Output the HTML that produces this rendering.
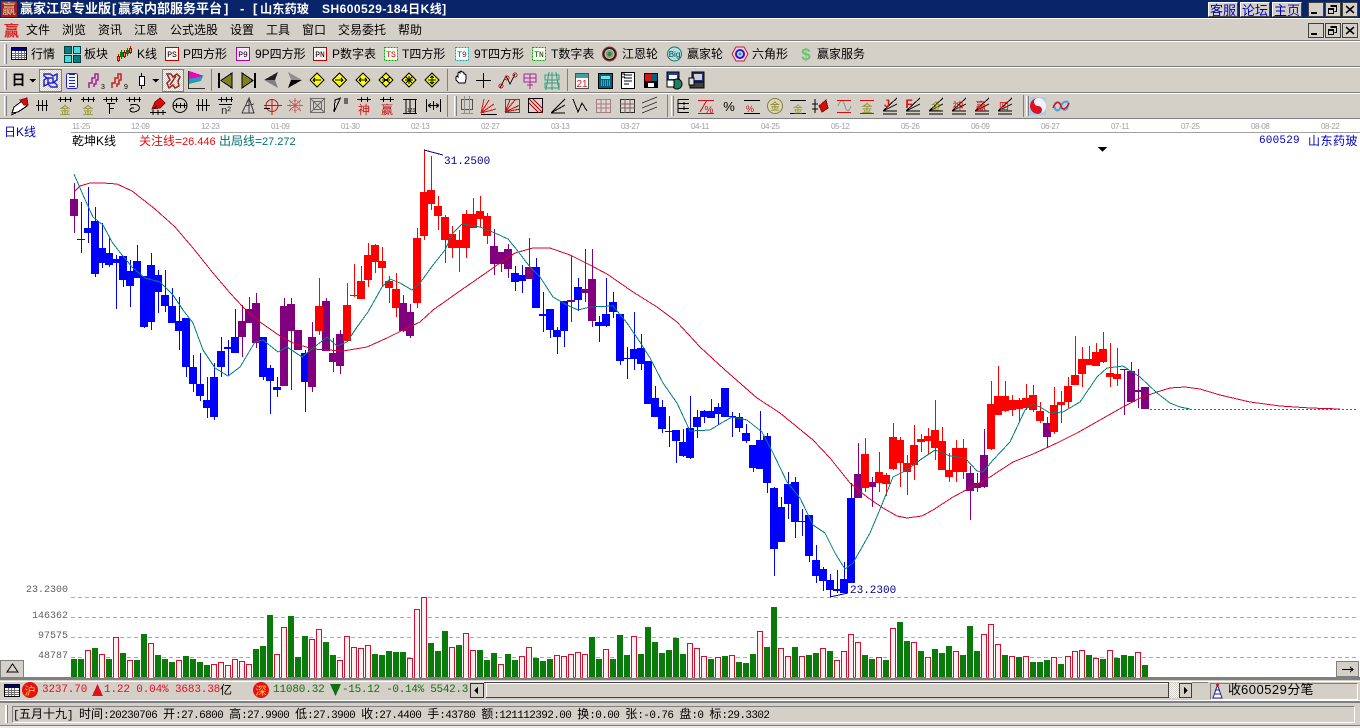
<!DOCTYPE html>
<html><head><meta charset="utf-8"><title>赢家江恩专业版</title>
<style>
html,body{margin:0;padding:0;width:1360px;height:728px;overflow:hidden;background:#d4d0c8}
.t{position:absolute;white-space:pre;font:12px/14px "Liberation Sans","WenQuanYi Zen Hei","Noto Sans CJK SC",sans-serif;color:#000}
.b{position:absolute}
.n{font-family:"Liberation Sans",sans-serif}
.m{font:11px/14px "Liberation Mono",monospace;letter-spacing:-.15px}
.ax{position:absolute;top:122px;font:8px/10px "Liberation Sans",sans-serif;letter-spacing:-.4px;color:#a0a0a0;white-space:pre}
.yl{position:absolute;width:50px;left:18px;text-align:right;font:10px/12px "Liberation Mono",monospace;color:#606060}
.st i{font:normal 11px/14px "Liberation Mono",monospace;letter-spacing:-.6px}
.wb{position:absolute;background:#d4d0c8;border-top:1px solid #fff;border-left:1px solid #fff;border-right:1px solid #404040;border-bottom:1px solid #404040;box-sizing:border-box;color:#0000c0;font:13px/13px "WenQuanYi Zen Hei","Noto Sans CJK SC",sans-serif;text-align:center}
svg{position:absolute;left:0;top:0}
</style></head>
<body>
<!-- title -->
<div class="b" style="left:0;top:0;width:1360px;height:18px;background:#0a246a"></div>
<div class="b" style="left:0;top:18px;width:1360px;height:1px;background:#fff"></div>
<span class="t" style="left:20px;top:2px;color:#fff;font-weight:bold;font-size:13px">赢家江恩专业版</span>
<span class="t" style="left:112px;top:2px;color:#fff;font-weight:bold;font-size:13px">[</span>
<span class="t" style="left:118px;top:2px;color:#fff;font-weight:bold;font-size:13px">赢家内部服务平台</span>
<span class="t" style="left:224px;top:2px;color:#fff;font-weight:bold;font-size:13px">]</span>
<span class="t" style="left:240px;top:2px;color:#fff;font-weight:bold;font-size:13px">-</span>
<span class="t" style="left:253px;top:2px;color:#fff;font-weight:bold;font-size:13px">[</span>
<span class="t" style="left:260px;top:2px;color:#fff;font-weight:bold;font-size:12px;letter-spacing:.1px;font-size:12.200px">山东药玻</span>
<span class="t" style="left:322px;top:2px;color:#fff;font-weight:bold;font-size:12px;letter-spacing:.45px">SH600529-184日K线]</span>
<div class="wb" style="left:1208px;top:2px;width:30px;height:15px">客服</div>
<div class="wb" style="left:1240px;top:2px;width:30px;height:15px">论坛</div>
<div class="wb" style="left:1272px;top:2px;width:30px;height:15px">主页</div>
<!-- separators -->
<div class="b" style="left:0;top:40px;width:1360px;height:1px;background:#808080"></div>
<div class="b" style="left:0;top:41px;width:1360px;height:1px;background:#fff"></div>
<div class="b" style="left:0;top:66px;width:1360px;height:1px;background:#808080"></div>
<div class="b" style="left:0;top:67px;width:1360px;height:1px;background:#fff"></div>
<div class="b" style="left:0;top:92px;width:1360px;height:1px;background:#808080"></div>
<div class="b" style="left:0;top:93px;width:1360px;height:1px;background:#fff"></div>
<!-- menu -->
<span class="t" style="left:26px;top:23px">文件</span>
<span class="t" style="left:62px;top:23px">浏览</span>
<span class="t" style="left:98px;top:23px">资讯</span>
<span class="t" style="left:134px;top:23px">江恩</span>
<span class="t" style="left:170px;top:23px">公式选股</span>
<span class="t" style="left:230px;top:23px">设置</span>
<span class="t" style="left:266px;top:23px">工具</span>
<span class="t" style="left:302px;top:23px">窗口</span>
<span class="t" style="left:338px;top:23px">交易委托</span>
<span class="t" style="left:398px;top:23px">帮助</span>
<!-- toolbar 1 -->
<span class="t" style="left:31px;top:47px">行情</span>
<span class="t" style="left:84px;top:47px">板块</span>
<span class="t" style="left:137px;top:47px">K线</span>
<span class="t" style="left:183px;top:47px">P四方形</span>
<span class="t" style="left:255px;top:47px">9P四方形</span>
<span class="t" style="left:332px;top:47px">P数字表</span>
<span class="t" style="left:402px;top:47px">T四方形</span>
<span class="t" style="left:474px;top:47px">9T四方形</span>
<span class="t" style="left:551px;top:47px">T数字表</span>
<span class="t" style="left:622px;top:47px">江恩轮</span>
<span class="t" style="left:687px;top:47px">赢家轮</span>
<span class="t" style="left:752px;top:47px">六角形</span>
<span class="t" style="left:817px;top:47px">赢家服务</span>
<!-- chart bg -->
<div class="b" style="left:0;top:118px;width:1360px;height:559px;background:#fff;border-top:1px solid #808080;box-sizing:border-box"></div>
<div class="b" style="left:71px;top:132px;width:1289px;height:1px;background:#a0a0a0"></div>
<span class="ax" style="left:72px">11-25</span><span class="ax" style="left:131px">12-09</span><span class="ax" style="left:201px">12-23</span><span class="ax" style="left:271px">01-09</span><span class="ax" style="left:341px">01-30</span><span class="ax" style="left:411px">02-13</span><span class="ax" style="left:481px">02-27</span><span class="ax" style="left:551px">03-13</span><span class="ax" style="left:621px">03-27</span><span class="ax" style="left:691px">04-11</span><span class="ax" style="left:761px">04-25</span><span class="ax" style="left:831px">05-12</span><span class="ax" style="left:901px">05-26</span><span class="ax" style="left:971px">06-09</span><span class="ax" style="left:1041px">06-27</span><span class="ax" style="left:1111px">07-11</span><span class="ax" style="left:1181px">07-25</span><span class="ax" style="left:1251px">08-08</span><span class="ax" style="left:1321px">08-22</span>
<!-- bottom chrome -->
<div class="b" style="left:0;top:677px;width:1360px;height:3px;background:#808080"></div>
<div class="b" style="left:0;top:681px;width:1360px;height:1px;background:#fff"></div>
<div class="b" style="left:0;top:700px;width:1360px;height:1px;background:#fff"></div>
<div class="b" style="left:0;top:701px;width:1360px;height:2px;background:#808080"></div>
<div class="b" style="left:12px;top:706px;width:1343px;height:17px;border:1px solid;border-color:#808080 #fff #fff #808080;box-sizing:border-box"></div>
<div class="b" style="left:5px;top:705px;width:2px;height:18px;background:#fff;border-right:1px solid #808080"></div>
<div class="b" style="left:0;top:725px;width:1360px;height:1px;background:#808080"></div>
<div class="b" style="left:0;top:726px;width:1360px;height:2px;background:#eceae4"></div>
<div class="b" style="left:1210px;top:683px;width:148px;height:17px;border:1px solid;border-color:#808080 #fff #fff #808080;box-sizing:border-box"></div>

<svg width="1360" height="728" viewBox="0 0 1360 728" shape-rendering="crispEdges">
<defs>
<path id="fan" fill="none" stroke="#000" d="M-7 8L7-5M-7 8L7 1M-7 8H7M-7 11H7"/>
<path id="dia" fill="#ff0" stroke="#000" d="M0-7L7 0 0 7-7 0Z"/>
<pattern id="chk" width="2" height="2" patternUnits="userSpaceOnUse"><rect width="2" height="2" fill="#fff"/><rect width="1" height="1" fill="#d4d0c8"/><rect x="1" y="1" width="1" height="1" fill="#d4d0c8"/></pattern>
</defs>

<!-- grid -->
<g stroke="#aaa" stroke-dasharray="4 3"><path d="M71 597.500H1358M71 617.500H1358M71 637.500H1358M71 657.500H1358"/></g>

<!-- volume green -->
<path fill="none" stroke="#0a7a0a" stroke-width="6" d="M74 659V677M81 659V677M95 648V677M109 659V677M123 653V677M137 660V677M144 634V677M158 655V677M165 659V677M172 662V677M186 656V677M193 659V677M200 662V677M207 665V677M256 649V677M263 646V677M270 615V677M291 616V677M298 657V677M305 636V677M326 642V677M333 655V677M375 654V677M382 655V677M389 651V677M396 652V677M403 652V677M431 643V677M438 651V677M445 631V677M459 645V677M480 650V677M487 660V677M494 653V677M508 654V677M515 660V677M536 658V677M543 661V677M550 659V677M592 637V677M599 659V677M613 659V677M620 635V677M627 655V677M641 654V677M648 627V677M655 642V677M662 653V677M669 650V677M676 638V677M683 654V677M711 659V677M725 656V677M739 662V677M746 663V677M753 654V677M767 647V677M774 607V677M795 647V677M809 655V677M816 653V677M830 651V677M865 655V677M872 659V677M886 660V677M900 622V677M907 641V677M921 651V677M935 649V677M942 653V677M949 646V677M963 655V677M970 626V677M977 651V677M1005 655V677M1019 657V677M1033 662V677M1040 662V677M1047 660V677M1061 664V677M1089 655V677M1103 659V677M1117 658V677M1124 655V677M1131 656V677M1145 665V677"/>
<!-- volume red -->
<path fill="none" stroke="#d01030" stroke-width="6" d="M88 650V677M102 654V677M116 637V677M130 660V677M151 643V677M179 660V677M214 664V677M221 662V677M228 665V677M235 659V677M242 661V677M249 664V677M277 654V677M284 627V677M312 639V677M319 629V677M340 660V677M347 636V677M354 647V677M361 648V677M368 645V677M410 658V677M417 609V677M424 597V677M452 647V677M466 633V677M473 650V677M501 664V677M522 656V677M529 647V677M557 655V677M564 656V677M571 654V677M578 652V677M585 654V677M606 649V677M634 636V677M690 643V677M697 648V677M704 656V677M718 657V677M732 655V677M760 631V677M781 648V677M788 656V677M802 656V677M823 648V677M837 660V677M844 651V677M851 634V677M858 642V677M879 657V677M893 628V677M914 642V677M928 657V677M956 651V677M984 634V677M991 624V677M998 644V677M1012 656V677M1026 656V677M1054 657V677M1068 656V677M1075 651V677M1082 650V677M1096 658V677M1110 650V677M1138 652V677"/>
<g transform="translate(0,1)"><path fill="none" stroke="#fff0f0" stroke-width="4" d="M88 650V677M102 654V677M116 637V677M130 660V677M151 643V677M179 660V677M214 664V677M221 662V677M228 665V677M235 659V677M242 661V677M249 664V677M277 654V677M284 627V677M312 639V677M319 629V677M340 660V677M347 636V677M354 647V677M361 648V677M368 645V677M410 658V677M417 609V677M424 597V677M452 647V677M466 633V677M473 650V677M501 664V677M522 656V677M529 647V677M557 655V677M564 656V677M571 654V677M578 652V677M585 654V677M606 649V677M634 636V677M690 643V677M697 648V677M704 656V677M718 657V677M732 655V677M760 631V677M781 648V677M788 656V677M802 656V677M823 648V677M837 660V677M844 651V677M851 634V677M858 642V677M879 657V677M893 628V677M914 642V677M928 657V677M956 651V677M984 634V677M991 624V677M998 644V677M1012 656V677M1026 656V677M1054 657V677M1068 656V677M1075 651V677M1082 650V677M1096 658V677M1110 650V677M1138 652V677"/></g>

<!-- wicks -->
<g fill="none" transform="translate(.5,0)">
<path stroke="#0000ff" d="M81 202V253M88 187V243M95 207V277M102 223V268M109 238V267M116 255V309M123 257V287M130 260V307M137 245V278M144 276V328M151 253V330M158 270V313M165 270V312M172 288V323M179 297V350M186 318V377M193 355V392M200 353V401M207 377V418M214 363V420M221 337V377M228 340V375M235 309V353M263 337V380M270 365V414M277 377V397M305 350V412M515 266V291M522 265V293M536 258V308M543 292V332M550 309V338M557 327V354M564 301V347M578 278V311M599 316V342M606 278V327M613 292V318M620 314V365M627 347V379M634 312V370M641 334V370M648 361V404M655 386V417M662 400V433M669 416V447M676 430V463M683 429V457M690 396V459M697 410V438M704 410V423M711 399V418M718 403V425M725 388V417M732 412V437M739 413V432M746 424V443M753 445V472M760 411V469M767 433V493M774 487V576M781 497V542M788 472V519M795 477V538M802 509V536M809 515V562M816 545V583M823 567V591M830 574V597M837 570V593M844 562V593M851 483V583"/>
<path stroke="#800080" d="M74 183V233M242 305V357M249 297V323M256 293V348M284 298V386M291 298V390M298 330V350M312 322V392M326 298V351M333 338V372M340 330V374M403 295V332M410 304V338M494 229V275M501 252V272M508 244V278M529 238V278M571 255V322M585 249V302M592 249V327M858 443V498M872 477V507M970 466V520M977 473V492M984 429V488M1047 417V448M1124 369V415M1131 362V402M1138 369V408M1145 387V409"/>
<path stroke="#ff0000" d="M319 278V335M347 283V341M354 264V297M361 266V299M368 243V287M375 244V273M382 247V287M389 276V303M396 273V317M417 228V308M424 150V240M431 156V210M438 196V230M445 215V263M452 226V258M459 230V272M466 210V258M473 198V228M480 196V227M487 213V244M865 438V492M879 452V492M886 473V496M893 423V470M900 437V487M907 455V495M914 425V480M921 434V452M928 428V455M935 400V460M942 427V470M949 453V482M956 440V482M963 439V479M991 381V450M998 366V415M1005 381V412M1012 395V416M1019 398V421M1026 384V410M1033 385V412M1040 402V423M1054 387V434M1061 391V423M1068 377V408M1075 336V385M1082 347V387M1089 346V365M1096 343V366M1103 332V363M1110 343V387M1117 348V386"/>
</g>
<!-- bodies -->
<g fill="none" stroke-width="8">
<path stroke="#0000ff" d="M81 239V240M88 228V233M95 221V274M102 248V263M109 253V265M116 259V263M123 256V280M130 271V286M137 261V278M144 276V327M151 265V322M158 275V292M165 295V306M172 306V323M179 321V331M186 318V367M193 367V384M200 384V396M207 400V408M214 377V417M221 351V367M228 347V349M235 337V353M263 337V377M270 368V381M277 387V390M305 353V382M515 273V282M522 275V281M536 267V308M543 314V316M550 309V330M557 330V337M564 301V331M578 287V300M599 322V326M606 314V326M613 302V312M620 314V361M627 358V359M634 349V359M641 348V364M648 361V404M655 398V417M662 407V429M669 431V432M676 430V441M683 442V456M690 428V458M697 417V427M704 411V417M711 411V418M718 407V414M725 388V417M732 416V417M739 417V428M746 433V441M753 445V468M760 440V469M767 436V483M774 488V549M781 507V542M788 484V504M795 482V522M802 521V522M809 515V556M816 560V576M823 569V581M830 580V590M837 589V591M844 579V593M851 498V583"/>
<path stroke="#800080" d="M74 199V216M242 321V337M249 309V323M256 303V343M284 306V386M291 304V331M298 330V350M312 337V387M326 301V351M333 353V362M340 334V366M403 303V331M410 312V336M494 246V264M501 252V264M508 249V269M529 267V279M571 300V302M585 289V293M592 279V321M858 474V498M872 482V487M970 473V491M977 483V488M984 455V487M1047 423V437M1124 369V370M1131 371V402M1138 390V392M1145 387V409"/>
<path stroke="#ff0000" d="M319 306V331M347 305V341M354 295V296M361 281V299M368 255V280M375 245V262M382 261V268M389 281V288M396 289V308M417 238V303M424 192V236M431 190V204M438 206V216M445 217V240M452 234V248M459 240V248M466 214V248M473 214V228M480 211V219M487 216V236M865 454V488M879 472V483M886 475V484M893 437V469M900 440V463M907 463V472M914 445V465M921 439V442M928 436V441M935 430V448M942 441V470M949 470V477M956 448V472M963 448V472M991 404V449M998 396V415M1005 396V411M1012 400V410M1019 400V409M1026 398V408M1033 395V410M1040 411V421M1054 405V432M1061 402V405M1068 386V402M1075 375V385M1082 359V374M1089 359V365M1096 352V366M1103 349V362M1110 373V377M1117 374V379"/>
</g>
<!-- MA -->
<polyline fill="none" stroke="#d80028" points="74,192 80,186 90,183 103,183 117,184 132,191 155,209 175,227 193,248 213,273 230,293 243,307 260,322 280,336 293,343 313,349 343,351 367,347 387,338 403,330 420,322 433,310 457,293 483,275 500,263 515,253 533,248 550,248 570,255 590,265 607,274 633,292 657,307 677,322 700,347 725,370 757,398 780,413 813,440 830,458 850,483 867,497 883,508 897,516 907,518 922,516 933,510 953,497 970,488 990,477 1013,462 1033,454 1057,443 1077,433 1100,420 1123,407 1140,398 1157,392 1170,388 1185,387 1200,389 1220,395 1250,402 1280,406 1310,408 1340,409"/>
<polyline fill="none" stroke="#008080" points="74,174 83,195 93,217 103,225 112,242 122,255 133,268 145,278 160,282 173,295 183,310 193,323 203,350 215,368 228,376 240,367 255,342 263,340 278,352 287,347 302,357 317,345 327,337 337,346 347,342 357,327 368,312 382,287 390,279 400,283 412,290 420,283 433,265 445,250 453,233 462,224 480,227 495,233 508,239 517,250 530,267 540,277 553,297 567,305 578,310 590,307 613,306 627,323 640,342 650,358 663,383 677,403 690,431 710,430 723,422 732,417 747,420 762,432 773,453 787,482 800,498 813,525 825,533 835,553 845,569 853,563 870,533 883,502 893,477 907,470 920,460 935,450 950,456 965,458 977,471 983,472 993,460 1010,442 1025,410 1032,404 1040,407 1050,413 1063,412 1080,402 1097,377 1107,368 1123,366 1140,377 1157,393 1170,403 1180,407 1190,409"/>
<path stroke="#606060" stroke-dasharray="2 2" d="M1150 409.500H1358"/>
<path fill="none" stroke="#00008b" d="M424 150L443 155M830 597L848 593"/>
<path fill="#000" d="M1098 147h9l-4.500 5z"/>

<!-- window buttons title -->
<g fill="#d4d0c8" stroke="#404040">
<rect x="1308.500" y="2.500" width="15" height="14"/><rect x="1325.500" y="2.500" width="15" height="14"/><rect x="1342.500" y="2.500" width="15" height="14"/>
<rect x="1308.500" y="23.500" width="15" height="14"/><rect x="1325.500" y="23.500" width="15" height="14"/><rect x="1342.500" y="23.500" width="15" height="14"/>
</g>
<g stroke="#000" fill="none">
<path stroke-width="2" d="M1311 13H1317M1311 34H1317"/>
<path d="M1330.500 5.500h6v6h-2M1330.500 6.500h6M1328.500 8.500h5v5h-5zM1328.500 9.500h5M1330.500 26.500h6v6h-2M1330.500 27.500h6M1328.500 29.500h5v5h-5zM1328.500 30.500h5"/>
<path stroke-width="1.500" d="M1346 6L1354 13M1354 6L1346 13M1346 27L1354 34M1354 27L1346 34" shape-rendering="auto"/>
</g>

<!-- title & menu logo -->
<rect x="1" y="1" width="16" height="16" fill="#a02020"/>
<text x="9" y="14" text-anchor="middle" font-size="14" font-family="'Noto Sans CJK SC',sans-serif" fill="#e8c8a0" shape-rendering="auto">赢</text>
<text x="11.500" y="36" text-anchor="middle" font-size="15" font-weight="bold" font-family="'Noto Sans CJK SC',sans-serif" fill="#d82020">赢</text>

<!-- handles -->
<g stroke="#fff"><path d="M4.500 44V64M4.500 70V90M4.500 96V116M454.500 96V116M671.500 96V116M1026.500 96V116"/></g>
<g stroke="#808080"><path d="M6.500 44V64M6.500 70V90M6.500 96V116M456.500 96V116M673.500 96V116M1028.500 96V116M211.500 69V91M447.500 69V91M567.500 69V91M447.500 95V117M667.500 95V117M1023.500 95V117"/></g>

<!-- toolbar1 icons -->
<rect x="11.500" y="47.500" width="15" height="12" fill="#fff" stroke="#000"/><rect x="12" y="48" width="14" height="3" fill="#000080"/>
<path stroke="#707070" d="M12 53.500H26M12 55.500H26M12 57.500H26M15.500 51V59M18.500 51V59M21.500 51V59M24.500 51V59"/>
<g stroke="#004040"><rect x="64.500" y="46.500" width="7" height="7" fill="#008080"/><rect x="73.500" y="46.500" width="7" height="7" fill="#40e0e0"/><rect x="64.500" y="55.500" width="7" height="7" fill="#40e0e0"/><rect x="73.500" y="55.500" width="7" height="7" fill="#008080"/></g>
<path stroke="#d00000" d="M118.500 54V62M124.500 50V58M130.500 46V54" /><path stroke="#008000" d="M121.500 50V59M127.500 48V56"/>
<path fill="#f08080" stroke="#c00000" d="M117.500 56.500h2v4h-2zM123.500 52.500h2v4h-2zM129.500 48.500h2v4h-2z"/><path fill="#008000" d="M120 52h3v5h-3zM126 50h3v4h-3z"/>
<g fill="#fdf3f0" stroke="#c00000"><rect x="165.500" y="47.500" width="13" height="13"/><rect x="313.500" y="47.500" width="13" height="13"/></g>
<rect x="236.500" y="47.500" width="13" height="13" fill="#fde8fd" stroke="#b000b0"/>
<rect x="384.500" y="47.500" width="13" height="13" fill="#f4fff0" stroke="#00b000" stroke-dasharray="2 1"/>
<rect x="455.500" y="47.500" width="13" height="13" fill="#f0ffff" stroke="#00b0b0" stroke-dasharray="2 1"/>
<rect x="532.500" y="47.500" width="13" height="13" fill="#f4fff0" stroke="#00b000" stroke-dasharray="2 1"/>
<g font-family="'Liberation Mono',monospace" font-size="8" text-anchor="middle">
<text x="172" y="57">PS</text><text x="243" y="57">P9</text><text x="320" y="57">PN</text>
<text x="391" y="57" fill="#d00000">TS</text><text x="462" y="57" fill="#d00000">T9</text><text x="539" y="57" fill="#203000">TN</text></g>
<g shape-rendering="auto" fill="none">
<circle cx="609.500" cy="54" r="7" fill="#202020" stroke="#a03030"/><circle cx="609.500" cy="54" r="4.500" fill="#80a080" stroke="#d0d0b0"/><circle cx="609.500" cy="54" r="2" fill="#408040"/>
<circle cx="674.500" cy="54" r="7" fill="#b0e0e0" stroke="#207070"/><text x="674.500" y="57" font-size="8" text-anchor="middle" fill="#004040" font-family="'Liberation Sans',sans-serif">Big</text>
<path d="M736 47h8l4 7-4 7h-8l-4-7z" fill="#f0d0f0" stroke="#d02020"/><circle cx="740" cy="54" r="4" stroke="#2020c0" stroke-width="2"/><circle cx="740" cy="54" r="1.500" fill="#20a0a0"/>
<text x="806" y="60" font-size="17" font-weight="bold" text-anchor="middle" fill="#70c070" font-family="'Liberation Sans',sans-serif">$</text>
</g>

<!-- toolbar2 icons -->
<text x="18.500" y="85" font-size="14" font-weight="bold" text-anchor="middle" font-family="'Noto Sans CJK SC',sans-serif">日</text>
<path d="M29 79h7l-3.500 3.500zM152 79h7l-3.500 3.500z"/>
<rect x="39.500" y="69.500" width="22" height="22" fill="url(#chk)" stroke="#808080"/>
<path fill="none" stroke="#2020e0" stroke-width="1.500" d="M44 74h6l3 2 4-2v6l-3 2 3 3v2h-6l-3-3-4 2v-6l3-2-3-2zM48 78h5v5h-5z" shape-rendering="auto"/>
<rect x="66.500" y="73.500" width="11" height="15" rx="2" fill="#f4f4ff" stroke="#2020d0"/><path stroke="#2020d0" d="M69 77.500h6M69 80.500h6M69 83.500h6M69 86.500h6M69 74.500h6"/>
<path fill="none" stroke="#a020a0" stroke-width="1.500" d="M89 88V83H92V78H95V74H98V80H96V84H94V87" shape-rendering="auto"/>
<text x="101" y="89" font-size="7" fill="#000" font-family="'Liberation Sans',sans-serif">3</text>
<path fill="none" stroke="#c02020" stroke-width="1.500" d="M112 88V83H115V78H118V74H121V80H119V84H117V87" shape-rendering="auto"/>
<text x="124" y="89" font-size="7" fill="#000" font-family="'Liberation Sans',sans-serif">9</text>
<path stroke="#000" d="M141.500 73V77M141.500 85V89"/><rect x="139.500" y="76.500" width="5" height="9" fill="#fff" stroke="#000"/>
<rect x="162.500" y="69.500" width="21" height="22" fill="url(#chk)" stroke="#808080"/>
<path fill="none" stroke="#a02020" stroke-width="1.500" d="M167 74h4l2 3 4-3 3 3-2 4 1 5-4 2-2-3-4 3-2-5 3-3zM170 85l6-9" shape-rendering="auto"/>
<path d="M189 71l15 5-15 4z" fill="#f000c0"/><path d="M189 79l14-3-2 5-12 3z" fill="#20a0b0"/><path stroke="#303030" d="M188.500 71V88M188 88.500H205"/>
<g><path d="M218 73h2v15h-2z"/><path d="M221 80.500L232 73V88Z" fill="#808020" stroke="#000"/><path d="M254 73h2v15h-2z"/><path d="M253 80.500L242 73V88Z" fill="#808020" stroke="#000"/>
<path d="M264 80L278 72 275 80Z" fill="#202020"/><path d="M264 80H275L278 88Z" fill="#808080"/>
<path d="M302 80L288 72 291 80Z" fill="#909090"/><path d="M302 80H291L288 88Z" fill="#000"/></g>
<g><use href="#dia" x="317" y="80"/><use href="#dia" x="339.500" y="80"/><use href="#dia" x="363" y="80"/><use href="#dia" x="386" y="80"/><use href="#dia" x="409" y="80"/><use href="#dia" x="432" y="80"/></g>
<path stroke="#000" fill="none" d="M313 80h8M313 80l2-2M313 80l2 2M335 80h8M343 80l-2-2M343 80l-2 2M359 80h8M359 80l2-2M359 80l2 2M367 80l-2-2M367 80l-2 2M382 77l8 6M390 77l-8 6M382 80h8M409 76v8M405 80h8M406 77l6 6M412 77l-6 6M432 76v8M428 80h8M430 78l2-2 2 2M430 82l2 2 2-2"/>
<path fill="#fff" stroke="#000" d="M456 80v-3l1-1 1 1v-4l1-1 1 1v-1l1-1 1 1 1 0 1 1v1l1 0 1 1v4l-1 4h-6l-3-3z" shape-rendering="auto"/>
<path stroke="#000" d="M483.500 73V88M476 80.500H491"/>
<path fill="none" stroke="#000" d="M500 88L506 76 510 84 515 74"/><circle cx="507" cy="78" r="2" fill="none" stroke="#d02020"/><circle cx="501" cy="86" r="2" fill="none" stroke="#d02020"/><circle cx="515" cy="75" r="2" fill="none" stroke="#d02020"/>
<path fill="none" stroke="#b020a0" d="M524 74h12M524 78h12v4h-12zM524 74v5M536 74v5M530 74v15M527 85h6"/>
<path fill="none" stroke="#30a080" d="M545 75h14v5h-14zM545 83h14v5h-14zM549 72l-3 18M556 72l3 18M552 72v18"/>
<rect x="575.500" y="73.500" width="13" height="15" fill="#fff" stroke="#505050"/><rect x="576" y="74" width="12" height="4" fill="#40a0a0"/><text x="582" y="87" font-size="10" text-anchor="middle" fill="#d02020" font-family="'Liberation Sans',sans-serif">21</text>
<rect x="598.500" y="73.500" width="14" height="15" fill="#006080" stroke="#000"/><rect x="601" y="76" width="9" height="3" fill="#80e0e0"/><path stroke="#a0e0e0" stroke-dasharray="1 1" d="M601 81h9M601 83h9M601 85h9"/>
<rect x="621.500" y="72.500" width="13" height="16" fill="#fff" stroke="#000"/><path stroke="#000" d="M624 75h8M624 78h8M624 81h8M624 84h5M622 74h3M622 77h3"/>
<rect x="644" y="73" width="14" height="15" fill="#000"/><path fill="#e01010" d="M645 74h6v7h-6z"/><path fill="#006080" d="M651 74h6v7h-6z"/><rect x="648" y="83" width="6" height="4" fill="#fff"/>
<rect x="667" y="72" width="12" height="9" fill="#2040a0" stroke="#000"/><rect x="669" y="75" width="8" height="4" fill="#fff"/><circle cx="677" cy="84" r="5" fill="#208060" stroke="#000"/><rect x="667" y="80" width="7" height="7" fill="#fff" stroke="#000"/>
<rect x="692" y="72" width="12" height="10" fill="#203080" stroke="#000"/><rect x="694" y="74" width="8" height="6" fill="#d0d0d0"/><rect x="690" y="82" width="14" height="6" fill="#404040" stroke="#000"/><rect x="689" y="78" width="5" height="7" fill="#e0e0e0" stroke="#000"/>

<!-- toolbar3 icons -->
<g fill="none" stroke="#000">
<path d="M12 113L14 107 22 101 27 106 18 112Z" fill="#fff"/><path d="M20 100L27 98 28 105 24 105Z" fill="#d01010" stroke="#a00000"/><path d="M11 115L16 113"/>
<path d="M36 105.500H48M38.500 100V111M42.500 100V111M46.500 100V111"/>
<path d="M58 99.500H72M60.500 97V102M65.500 97V102M70.500 97V102M81 99.500H95M83.500 97V102M88.500 97V102M93.500 97V102"/>
<path d="M103 99.500H118M106.500 97V102M111.500 97V102M116.500 97V102M107 103.500H115M109.500 103V114M109.500 108.500H114"/>
<path d="M126 99.500H141M129.500 97V102M134.500 97V102M139.500 97V102M130 105C142 102 142 112 133 112 129 112 129 107 134 108"/>
<path d="M150 112.500H166M153 110V115M158 110V115M163 110V115"/><path d="M152 109L155 102 160 98 165 103 160 108Z" fill="#d01010" stroke="#a00000"/><path d="M154 109L157 105" stroke="#000"/>
<circle cx="180" cy="105.500" r="7" shape-rendering="auto"/><path d="M173 105.500H187M176.500 103V108M180.500 103V108M184.500 103V108"/>
<path d="M196 105.500H210M198.500 99V111M202.500 99V111M206.500 99V111"/>
<path d="M218 99.500H233M221.500 97V102M226.500 97V102M231.500 97V102M219 104.500H232"/>
<path d="M242 113L249 98 254 113ZM245 106L254 104M249 98V113" stroke="#404040"/>
<circle cx="272" cy="105.500" r="6" stroke="#d01010" shape-rendering="auto"/><path stroke="#d01010" d="M264 105.500H282M272 99V115"/><path d="M264 108.500H270"/>
<circle cx="295" cy="105.500" r="5" stroke="#c06060" stroke-dasharray="1 1" shape-rendering="auto"/><path stroke="#c06060" d="M287 105.500H303M295 98V113M289 100L301 111M301 100L289 111"/>
<rect x="310.500" y="98.500" width="14" height="14" stroke="#707070"/><rect x="313.500" y="101.500" width="8" height="8" stroke="#a05050"/><path stroke="#707070" d="M310 98L325 113M325 98L310 113"/>
<path d="M334 112L335 100 341 98M334 112L340 99M345 98V104M347 98V104"/>
<path d="M357 99.500H371M361.500 97V102M367.500 97V102M380 99.500H394M383.500 97V102M390.500 97V102"/>
<path d="M403 99.500H417M415.500 99V113M403 113.500H417M406 99V113M410 99V113"/>
<path d="M426.500 99V112M440.500 99V112M428 105.500H439M428 105.500l3-2M428 105.500l3 2M439 105.500l-3-2M439 105.500l-3 2M433.500 101V110"/>
<rect x="461.500" y="99.500" width="11" height="10" stroke="#505050"/><path stroke="#909090" d="M461 113.500H473M464.500 96V113M469.500 96V113"/>
<path stroke="#e01010" d="M481 113L484 99M481 113L489 100M481 113L494 104M481 113L496 109"/><path stroke="#000" d="M481 114.500H497"/>
<rect x="505.500" y="99.500" width="14" height="13" stroke="#505050"/><path stroke="#c01010" d="M505 112L510 100M505 112L515 100M505 112L520 105M505 112L520 109"/>
<rect x="528.500" y="98.500" width="14" height="14" stroke="#000" fill="#e8d0d0"/><path stroke="#a01010" d="M529 99L543 113M529 103L539 113M533 99L543 109"/>
<path d="M551 113L565 99M551 113L565 105M551 113H565"/>
<path d="M573 99L578 112 582 103 587 111"/>
<rect x="596.500" y="99.500" width="14" height="13" fill="#e4d4d4" stroke="#a08080"/><path stroke="#a08080" d="M601 99V113M606 99V113M596 104H611M596 108H611"/>
<rect x="620.500" y="99.500" width="14" height="13" fill="#ded6d0" stroke="#303030"/><path stroke="#806060" d="M625 99V113M630 99V113M620 104H635M620 108H635"/>
<path stroke="#404040" d="M642 103L657 97M642 108L657 102M642 113L657 107"/>
<path d="M678 99.500V113M678 99.500H689M678 103.500H689M678 108.500H689M678 112.500H689M684 102V105M684 106V110"/>
<path stroke="#d01010" d="M698 100.500H714M698 113.500H714M700 112L707 100"/>
<path stroke="#000" d="M744 100.500H760M744 113.500H760M790 100.500H806M790 113.500H806"/>
<circle cx="775" cy="106" r="7.500" stroke="#808040" fill="#ddd8b8" shape-rendering="auto"/>
<path d="M815 99V113M812 104H818M812 109H818"/><path d="M819 106L826 100 828 108 822 112Z" fill="#d01010" stroke="#a00000"/>
<path stroke="#909090" d="M838 106C841 99 843 99 845 106S849 112 851 106"/><path stroke="#d01010" d="M837 100.500H851M837 112.500H851"/><path stroke="#d01010" d="M860 100.500H874M860 113.500H874"/>
<use href="#fan" x="890" y="103"/><use href="#fan" x="913" y="103"/><use href="#fan" x="936" y="103"/><use href="#fan" x="959" y="103"/><use href="#fan" x="982" y="103"/><use href="#fan" x="1005" y="103"/>
</g>
<g font-family="'Noto Sans CJK SC',sans-serif" text-anchor="middle">
<text x="65" y="114" font-size="11" fill="#909020">金</text><text x="88" y="114" font-size="11" fill="#909020">金</text>
<text x="364" y="114" font-size="12" fill="#e01010">神</text><text x="387" y="114" font-size="12" fill="#c01010">赢</text>
<text x="226" y="114" font-size="11" fill="#202020" font-family="'Liberation Sans',sans-serif">n²</text>
<text x="798" y="113" font-size="10" fill="#909020">金</text><text x="867" y="112" font-size="11" fill="#909020">金</text>
<text x="936" y="110" font-size="10" fill="#909020">金</text><text x="958" y="110" font-size="11" fill="#e01010">神</text><text x="981" y="110" font-size="11" fill="#c01010">赢</text><text x="1004" y="110" font-size="10" fill="#e01010">四</text>
<text x="775" y="110" font-size="10" fill="#808020">金</text>
<text x="887" y="107" font-size="11" fill="#e01010" font-weight="bold" font-family="'Liberation Sans',sans-serif">J</text><text x="909" y="108" font-size="12" fill="#e01010" font-weight="bold" font-family="'Liberation Sans',sans-serif">F</text>
<text x="729" y="111" font-size="13" font-family="'Liberation Sans',sans-serif">%</text>
<text x="709" y="113" font-size="10" fill="#d01010" font-family="'Liberation Sans',sans-serif">%</text>
<text x="750" y="112" font-size="9" fill="#d01010" font-family="'Liberation Sans',sans-serif">%</text>
<text x="411" y="112" font-size="5" font-family="'Liberation Sans',sans-serif">123</text>
</g>
<g shape-rendering="auto">
<rect x="1030" y="97" width="16" height="18" fill="#a0d0f0"/>
<circle cx="1038" cy="106" r="8" fill="#f0f0ff"/><path d="M1038 98A8 8 0 0 0 1038 114A4 4 0 0 0 1038 106A4 4 0 0 1 1038 98Z" fill="#e01020"/><circle cx="1038" cy="102" r="1.500" fill="#fff"/><circle cx="1038" cy="110" r="1.500" fill="#e01020"/>
<path fill="none" stroke="#50a0d0" stroke-width="2" d="M1054 106C1056 100 1060 102 1061 106S1066 112 1068 106 1063 100 1061 106 1056 112 1054 106Z"/>
<path fill="none" stroke="#e01020" stroke-width="1.500" d="M1053 108C1056 100 1060 102 1061 106S1066 110 1069 103"/>
</g>

<!-- chart corner buttons -->
<rect x="0.500" y="660.500" width="23" height="17" fill="#d4d0c8" stroke="#808080"/><path fill="none" stroke="#000" d="M12.500 664L7 672H18Z"/>
<rect x="1336.500" y="661.500" width="22" height="15" fill="#d4d0c8" stroke="#808080"/><path stroke="#000" fill="none" d="M1342 669.500H1353M1350 667l3 2.500-3 2.500"/>

<!-- status row icons -->
<rect x="4.500" y="684.500" width="15" height="12" fill="#fff" stroke="#000"/><rect x="5" y="685" width="14" height="3" fill="#000080"/><path stroke="#707070" d="M5 690.500H19M5 692.500H19M5 694.500H19M8.500 688V696M11.500 688V696M14.500 688V696"/>
<g shape-rendering="auto"><circle cx="30" cy="690" r="8" fill="#e81010"/><circle cx="261" cy="690" r="8" fill="#e81010"/></g>
<text x="30" y="694.500" font-size="11" text-anchor="middle" fill="#ffd040" font-family="'Noto Sans CJK SC',sans-serif">沪</text>
<text x="261" y="694.500" font-size="11" text-anchor="middle" fill="#ffd040" font-family="'Noto Sans CJK SC',sans-serif">深</text>
<path d="M97.500 684L103 696H92Z" fill="#e01020"/><path d="M335.500 696L330 684H341Z" fill="#107010"/>
<!-- scrollbar -->
<rect x="470.500" y="683.500" width="13" height="14" fill="#d4d0c8" stroke="#303030"/><path d="M478 687v7l-4-3.500z"/>
<rect x="484" y="683" width="684" height="15" fill="#d4d0c8"/><path stroke="#fff" d="M486.500 683V697M486 683.500H1168"/><path stroke="#404040" d="M484 682.500H1168M486 697.500H1168M1168.500 682V698"/>
<rect x="1169" y="683" width="10" height="15" fill="url(#chk)"/>
<rect x="1179.500" y="683.500" width="12" height="14" fill="#d4d0c8" stroke="#404040"/><path d="M1184 687v7l4-3.500z"/>
<path d="M1192 682.500H1208" stroke="#808080"/>
<path fill="#fff" stroke="#2020a0" d="M1217.500 685L1213 698H1222Z" shape-rendering="auto"/><path stroke="#2020a0" d="M1215 690H1220M1214 694H1221"/><circle cx="1217.500" cy="685" r="1.500" fill="#e01010" shape-rendering="auto"/>
</svg>

<!-- chart text -->
<span class="t" style="left:4px;top:125px;color:#0000c0">日K线</span>
<span class="t" style="left:72px;top:134px">乾坤K线</span>
<span class="t" style="left:139px;top:134px;color:#e01010">关注线=<span class="n" style="font-size:11px">26.446</span></span>
<span class="t" style="left:219px;top:134px;color:#007070">出局线=<span class="n" style="font-size:11px">27.272</span></span>
<span class="t m" style="left:1259px;top:134px;color:#0000c0;letter-spacing:.2px">600529</span>
<span class="t" style="left:1308px;top:134px;color:#0000c0;letter-spacing:.5px">山东药玻</span>
<span class="t m" style="left:444px;top:155px;color:#00008b;letter-spacing:0">31.2500</span>
<span class="t m" style="left:850px;top:584px;color:#00008b;letter-spacing:0">23.2300</span>
<span class="yl" style="top:585px">23.2300</span>
<span class="yl" style="top:611px">146362</span>
<span class="yl" style="top:631px">97575</span>
<span class="yl" style="top:651px">48787</span>

<!-- status row 1 -->
<span class="t m" style="left:42px;top:683px;color:#e01020">3237.70</span>
<span class="t m" style="left:104px;top:683px;color:#e01020">1.22 0.04% 3683.38</span>
<span class="t" style="left:220px;top:683px">亿</span>
<span class="t m" style="left:273px;top:683px;color:#107010">11080.32</span>
<span class="t m" style="left:342px;top:683px;color:#107010;letter-spacing:-.3px">-15.12 -0.14% 5542.3</span>
<span class="t" style="left:1228px;top:683px;font-size:13px">收<span class="n" style="letter-spacing:.5px">600529</span>分笔</span>
<!-- status row 2 -->
<span class="t st" style="left:13px;top:707px"><i>[</i>五月十九<i>] </i>时间<i>:20230706 </i>开<i>:27.6800 </i>高<i>:27.9900 </i>低<i>:27.3900 </i>收<i>:27.4400 </i>手<i>:43780 </i>额<i>:121112392.00 </i>换<i>:0.00 </i>张<i>:-0.76 </i>盘<i>:0 </i>标<i>:29.3302</i></span>
</body></html>
